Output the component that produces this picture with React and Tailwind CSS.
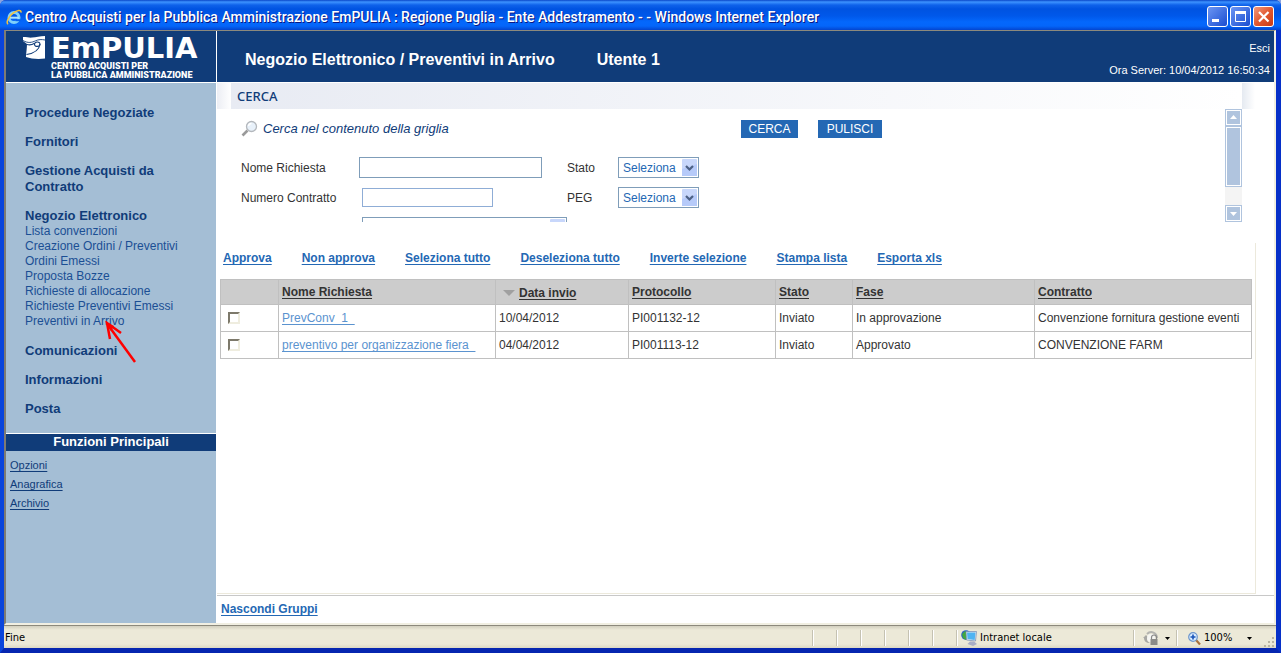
import React from "react";

const menu = [
  { label: "Procedure Negoziate" },
  { label: "Fornitori" },
  { label: "Gestione Acquisti da Contratto" },
  {
    label: "Negozio Elettronico",
    items: [
      "Lista convenzioni",
      "Creazione Ordini / Preventivi",
      "Ordini Emessi",
      "Proposta Bozze",
      "Richieste di allocazione",
      "Richieste Preventivi Emessi",
      "Preventivi in Arrivo",
    ],
  },
  { label: "Comunicazioni" },
  { label: "Informazioni" },
  { label: "Posta" },
];

const actions = [
  "Approva",
  "Non approva",
  "Seleziona tutto",
  "Deseleziona tutto",
  "Inverte selezione",
  "Stampa lista",
  "Esporta xls",
];

const rows = [
  ["PrevConv_1", "10/04/2012", "PI001132-12", "Inviato", "In approvazione", "Convenzione fornitura gestione eventi"],
  ["preventivo per organizzazione fiera", "04/04/2012", "PI001113-12", "Inviato", "Approvato", "CONVENZIONE FARM"],
];

function ExplorerIcon() {
  return (
    <svg viewBox="0 0 16 16" className="h-4 w-4 shrink-0" aria-hidden="true">
      <circle cx="8" cy="8.5" r="5" fill="none" stroke="#7fd0fa" strokeWidth="3" />
      <path d="M4 8.7h9" stroke="#a9e2ff" strokeWidth="2" />
      <path d="M9.5 10.2h5v2h-5z" fill="#0560ee" />
      <path d="M2.2 15C-.5 14 2.500 7.500 7 4.200 11 1 15.500.2 15 3.600" fill="none" stroke="#f4c23c" strokeWidth="1.500" />
    </svg>
  );
}

function TitleBar() {
  const base =
    "flex h-[21px] w-[21px] items-center justify-center rounded-[3px] border border-white";
  return (
    <div className="flex h-[30px] items-center rounded-t-md bg-[linear-gradient(#0a46c8_0px,#3d93ff_2px,#0f62ea_5px,#0053e1_9px,#0058ea_16px,#0468fc_22px,#0466fa_26px,#0345cf_30px)] pt-[3px] pr-[7px] pl-[6px]">
      <ExplorerIcon />
      <h1 className="ml-[3px] flex-1 overflow-hidden font-['Roboto',sans-serif] text-[14px] leading-[18px] font-medium whitespace-nowrap text-white [text-shadow:1px_1px_0_#0a1883]">
        Centro Acquisti per la Pubblica Amministrazione EmPULIA : Regione Puglia - Ente Addestramento - - Windows Internet Explorer
      </h1>
      <div className="flex gap-[2px]">
        <button aria-label="Riduci a icona" className={base + " bg-linear-to-br from-[#6c95f3] to-[#1a4bd0]"}>
          <svg viewBox="0 0 19 19" className="h-[19px] w-[19px]">
            <path d="M4 12h7v3H4z" fill="#fff" />
          </svg>
        </button>
        <button aria-label="Ingrandisci" className={base + " bg-linear-to-br from-[#6c95f3] to-[#1a4bd0]"}>
          <svg viewBox="0 0 19 19" className="h-[19px] w-[19px]">
            <path d="M4.500 5v9.500h10V5" fill="none" stroke="#fff" />
            <path d="M4 4h11v3H4z" fill="#fff" />
          </svg>
        </button>
        <button aria-label="Chiudi" className={base + " bg-linear-to-br from-[#f0987c] via-[#e25830] to-[#c93a12]"}>
          <svg viewBox="0 0 19 19" className="h-[19px] w-[19px]">
            <path d="M5 5l9.500 9.500M14.500 5L5 14.500" stroke="#fff" strokeWidth="2.200" />
          </svg>
        </button>
      </div>
    </div>
  );
}

function Logo() {
  return (
    <div className="flex h-[51px] w-[211px] shrink-0 gap-[6px] border-r border-white pt-[5px] pl-[17px]">
      <svg viewBox="0 0 22 23" className="h-[23px] w-[22px] shrink-0" aria-hidden="true">
        <path d="M0 1c4 0 6 .8 9 .6C13 1.400 17 0 22 0v22.500c-6 .8-14 .5-19-1.500 0-3 .6-6 .8-9.500L4 8 0 5z" fill="#fff" />
        <path d="M0 4.500c5 3 9 2 12.500.3C15.500 3.400 18.500 3.300 22 4" fill="none" stroke="#103c79" strokeWidth=".9" />
        <path d="M4 8.500c3 1 5 .4 7.500-1.200M3.500 18.500C10 17.500 16 15 17 8" fill="none" stroke="#103c79" strokeWidth="1.100" />
        <path d="M11.500 8.500c0-3 5.500-3.500 5.500-.3 0 2.800-5.500 3-5.500.3z" fill="none" stroke="#103c79" strokeWidth="1.100" />
      </svg>
      <div className="whitespace-nowrap text-white">
        <div className="font-['DejaVu_Sans',sans-serif] text-[29px] leading-6 font-bold">EmPULIA</div>
        <div className="pt-[2px] font-['Roboto',sans-serif] text-[9px] leading-[9px] font-black">
          CENTRO ACQUISTI PER
          <br />
          LA PUBBLICA AMMINISTRAZIONE
        </div>
      </div>
    </div>
  );
}

function Header() {
  return (
    <header className="flex border-b border-white bg-[#103c79] text-white">
      <Logo />
      <div className="flex flex-1 items-center gap-[42px] pt-[6px] pl-7 text-[16px] font-bold whitespace-nowrap">
        <h2>Negozio Elettronico / Preventivi in Arrivo</h2>
        <span>Utente 1</span>
      </div>
      <div className="flex flex-col items-end gap-2 pt-[10px] pr-1 text-[11px] leading-[14px] whitespace-nowrap">
        <a href="#esci">Esci</a>
        <span>Ora Server: 10/04/2012 16:50:34</span>
      </div>
    </header>
  );
}

function Pointer() {
  return (
    <svg viewBox="0 0 32 44" className="pointer-events-none absolute top-[7px] left-[80px] h-11 w-8" aria-hidden="true">
      <path d="M3 4l27 37" stroke="#f00" strokeWidth="2.500" fill="none" />
      <path d="M5 18L2 2l14 10" stroke="#f00" strokeWidth="2.500" fill="none" />
      <path d="M1 1l8 4-3 5z" fill="#f00" />
    </svg>
  );
}

function Sidebar() {
  return (
    <aside className="flex w-[210px] shrink-0 flex-col bg-[#a4bed5] text-[#103c79]">
      <nav className="flex flex-col gap-[13px] pt-[22px] pr-10 pb-4 pl-[19px]">
        {menu.map((group) => (
          <div key={group.label}>
            <a href="#menu" className="block text-[13px] leading-4 font-bold">
              {group.label}
            </a>
            {group.items && (
              <ul className="pb-px text-[12px] leading-[15px] whitespace-nowrap text-[#1b4f94]">
                {group.items.map((item) => (
                  <li key={item} className="relative">
                    <a href="#voce">{item}</a>
                    {item === "Preventivi in Arrivo" && <Pointer />}
                  </li>
                ))}
              </ul>
            )}
          </div>
        ))}
      </nav>
      <h3 className="border-t border-white bg-[#103c79] pb-[2px] text-center text-[13px] leading-[15px] font-bold text-white">
        Funzioni Principali
      </h3>
      <ul className="flex flex-col gap-[5px] pt-[7px] pl-1 text-[11px] leading-[14px] underline underline-offset-2">
        <li><a href="#opzioni">Opzioni</a></li>
        <li><a href="#anagrafica">Anagrafica</a></li>
        <li><a href="#archivio">Archivio</a></li>
      </ul>
    </aside>
  );
}

function Dropdown({ id, wide }) {
  return (
    <div className={wide ? "relative ml-[3px] h-[21px] w-[205px]" : "relative h-[21px] w-[81px]"}>
      <select
        id={id}
        aria-label={wide ? "Altro filtro" : undefined}
        className="h-full w-full appearance-none border border-[#7f9db9] bg-white pl-1 text-[12px] text-[#2468b4]"
      >
        <option>{wide ? "" : "Seleziona"}</option>
      </select>
      <svg viewBox="0 0 15 17" className="pointer-events-none absolute top-[2px] right-[2px] h-[17px] w-[15px]" aria-hidden="true">
        <rect width="15" height="17" rx="1" fill="#c8d7fb" />
        <path d="M0 17V10L15 5v12z" fill="#b6caf9" />
        <path d="M4 7l3.500 3.500L11 7" fill="none" stroke="#4d6185" strokeWidth="2.200" />
      </svg>
    </div>
  );
}

function ScrollBar() {
  const box = "border border-[#b0c4de] bg-[#b0c4de] shadow-[inset_0_0_0_1px_#fff]";
  return (
    <div className="flex w-[17px] shrink-0 flex-col bg-[#f4f4f4]">
      <button aria-label="Scorri su" className={"h-[17px] " + box}>
        <svg viewBox="0 0 15 15" className="h-[15px] w-[15px]"><path d="M4 9l3.500-4L11 9z" fill="#fff" /></svg>
      </button>
      <div className={"h-[61px] " + box} />
      <div className="flex-1" />
      <button aria-label="Scorri giù" className={"h-[17px] " + box}>
        <svg viewBox="0 0 15 15" className="h-[15px] w-[15px]"><path d="M4 6l3.500 4L11 6z" fill="#fff" /></svg>
      </button>
    </div>
  );
}

function SearchPanel() {
  const button = "h-[18px] bg-[#2468b4] text-[12px] leading-[18px] text-white";
  return (
    <section>
      <div className="flex h-[26px]">
        <div className="w-[14px] bg-linear-to-r from-[#eceef4] to-white" />
        <h3 className="flex-1 bg-linear-to-r from-[#e8ebf3] to-white pl-[6px] font-['Noto_Sans',sans-serif] text-[13px] leading-[26px] font-medium text-[#103c79]">
          CERCA
        </h3>
        <div className="mr-[19px] w-[13px] bg-linear-to-r from-[#e5eaf1] to-white" />
      </div>
      <div className="mr-8 flex h-[113px]">
        <form className="flex-1 overflow-hidden pl-6" onSubmit={(e) => e.preventDefault()}>
          <div className="mt-[11px] mb-[19px] flex h-[18px] items-center">
            <svg viewBox="0 0 18 18" className="h-[18px] w-[18px]" aria-hidden="true">
              <path d="M1.500 15.500L6.500 10.500" stroke="#9a9a9a" strokeWidth="2.600" />
              <circle cx="10.500" cy="6.500" r="5" fill="#e8f1fa" stroke="#b4b8bd" strokeWidth="1.300" />
              <path d="M7.500 6a3 3 0 0 1 3-2.500" fill="none" stroke="#fff" strokeWidth="1.500" />
            </svg>
            <span className="w-[482px] pl-1 text-[13px] text-[#103c79] italic">Cerca nel contenuto della griglia</span>
            <button type="submit" className={button + " w-[57px]"}>CERCA</button>
            <button type="reset" className={button + " ml-5 w-16"}>PULISCI</button>
          </div>
          <div className="grid auto-rows-[21px] grid-cols-[118px_208px_51px_1fr] items-center gap-y-[9px] text-[12px] text-[#333]">
            <label htmlFor="nome">Nome Richiesta</label>
            <input id="nome" className="h-[21px] w-[183px] border border-[#7f9db9] px-1" />
            <label htmlFor="stato">Stato</label>
            <Dropdown id="stato" />
            <label htmlFor="numero">Numero Contratto</label>
            <input id="numero" className="ml-[3px] h-[19px] w-[131px] border border-[#8fadd6] px-1" />
            <label htmlFor="peg">PEG</label>
            <Dropdown id="peg" />
            <span />
            <Dropdown id="altro" wide />
          </div>
        </form>
        <ScrollBar />
      </div>
    </section>
  );
}

function Results() {
  const cell = "border border-[#c0c0c0] px-[3px]";
  const heads = ["Protocollo", "Stato", "Fase", "Contratto"];
  return (
    <section className="mt-[21px] mr-[18px] flex-1 border-r border-b border-[#ece9dc] pr-[3px] pl-[3px]">
      <div className="flex gap-[30px] pt-[7px] pl-[3px] text-[12px] leading-4 font-bold whitespace-nowrap text-[#2468b4]">
        {actions.map((a) => (
          <a key={a} href="#azione" className="underline underline-offset-2">{a}</a>
        ))}
      </div>
      <table className="mt-[13px] w-full table-fixed border-collapse text-left text-[12px] leading-4 whitespace-nowrap text-[#333]">
        <colgroup>
          <col className="w-[58px]" />
          <col className="w-[217px]" />
          <col className="w-[133px]" />
          <col className="w-[147px]" />
          <col className="w-[77px]" />
          <col className="w-[182px]" />
          <col />
        </colgroup>
        <thead>
          <tr className="h-[25px] bg-[#ccc]">
            <th className={cell} aria-label="Selezione" />
            <th className={cell}><a href="#nome" className="underline underline-offset-2">Nome Richiesta</a></th>
            <th className={cell}>
              <span className="flex items-center gap-1 pt-[2px] pl-1">
                <svg viewBox="0 0 12 6" className="h-[6px] w-3" aria-hidden="true"><path d="M0 0h12L6 6z" fill="#a0a0a0" /></svg>
                <a href="#data" className="underline underline-offset-2">Data invio</a>
              </span>
            </th>
            {heads.map((h) => (
              <th key={h} className={cell}><a href="#ordina" className="underline underline-offset-2">{h}</a></th>
            ))}
          </tr>
        </thead>
        <tbody>
          {rows.map(([name, ...rest]) => (
            <tr key={name} className="h-[27px]">
              <td className={cell}>
                <input
                  type="checkbox"
                  aria-label={"Seleziona " + name}
                  className="ml-1 block h-3 w-3 appearance-none border-2 border-t-[#7d796b] border-r-[#efeddf] border-b-[#efeddf] border-l-[#7d796b] bg-white"
                />
              </td>
              <td className={cell}>
                <a href="#richiesta" className="whitespace-pre text-[#5b93cf] underline underline-offset-2">{name + "  "}</a>
              </td>
              {rest.map((value, i) => (
                <td key={i} className={cell}>{value}</td>
              ))}
            </tr>
          ))}
        </tbody>
      </table>
    </section>
  );
}

function Caret() {
  return (
    <svg viewBox="0 0 5 3" className="h-[3px] w-[5px]" aria-hidden="true"><path d="M0 0h5L2.500 3z" fill="#000" /></svg>
  );
}

function StatusBar() {
  const cell = "flex h-4 items-center border-l border-[#c5c2b2] shadow-[inset_1px_0_0_#fff]";
  return (
    <footer className="flex h-[23px] items-center border-t border-[#8c897c] bg-[linear-gradient(#d2cfbf,#ece9d8_4px,#ece9d8_18px,#dcd8c4)] pt-[2px] font-['DejaVu_Sans_Condensed','Noto_Sans',sans-serif] text-[11px] whitespace-nowrap text-black">
      <span className="flex-1 pl-px">Fine</span>
      {[0, 1, 2, 3, 4, 5].map((n) => (
        <span key={n} className={cell + " w-6"} />
      ))}
      <span className={cell + " w-[177px] gap-[3px] pl-1"}>
        <svg viewBox="0 0 16 16" className="h-4 w-4" aria-hidden="true">
          <circle cx="5" cy="5" r="4.800" fill="#2b62c4" />
          <path d="M1 4l3-3 3 2-2 2 2 2-2 3-3-2z" fill="#42a93f" />
          <path d="M5 1.500h10.500l-1 9.500-9-1z" fill="#dfe8f3" stroke="#7088b0" strokeWidth=".7" />
          <path d="M6 2.500h8.500l-.8 7.500L6.500 9z" fill="#4fb4f2" />
          <path d="M9 11.500h4l3 2.500-4 2-5.500-2z" fill="#a9aec6" />
        </svg>
        Intranet locale
      </span>
      <span className={cell + " w-[43px] gap-[6px] pl-[9px]"}>
        <svg viewBox="0 0 16 14" className="h-[14px] w-4" aria-hidden="true">
          <path d="M0 7l3-3 3 3H4c0 3 1 4 3 5-4 0-6-2-6-5z" fill="#a8a8a4" />
          <path d="M4 3c4-4 10-1 10 4" fill="none" stroke="#b4b4b0" strokeWidth="2" />
          <circle cx="8" cy="7" r="4" fill="#f5f5f2" />
          <path d="M8.500 8V6.500a2.500 2.500 0 0 1 5 0V8" fill="none" stroke="#888" strokeWidth="1.200" />
          <path d="M7.500 8h7v6h-7z" fill="#8b8b88" />
        </svg>
        <Caret />
      </span>
      <button className={cell + " w-[88px] gap-[3px] pl-[11px]"}>
        <svg viewBox="0 0 13 13" className="h-[13px] w-[13px]" aria-hidden="true">
          <path d="M8 8l4 4.500" stroke="#a9713c" strokeWidth="2.200" />
          <circle cx="5" cy="5" r="4.300" fill="#d9ecff" stroke="#6d96cc" strokeWidth="1.200" />
          <path d="M5 2.500v5M2.500 5h5" stroke="#1954b8" strokeWidth="1.600" />
        </svg>
        <span className="flex-1 text-left">100%</span>
        <span className="pr-3"><Caret /></span>
      </button>
      <svg viewBox="0 0 12 12" className="h-3 w-3 self-end" aria-hidden="true">
        <path d="M8 1h2v2H8zM4 5h2v2H4zM8 5h2v2H8zM0 9h2v2H0zM4 9h2v2H4zM8 9h2v2H8z" fill="#b8b4a2" />
      </svg>
    </footer>
  );
}

export default function App() {
  return (
    <div className="bg-[#8aa3e0]">
      <div className="flex min-h-screen flex-col rounded-t-md bg-[#0839c9] font-['Liberation_Sans',Arial,sans-serif]">
        <TitleBar />
        <div className="flex flex-1 flex-col border-t-0 border-r-[5px] border-b-[5px] border-l-4 border-r-[#0630c8] border-b-[#0626b0] border-l-[#0a45dc] bg-white">
          <div className="flex flex-1 flex-col border-t border-r-2 border-b-2 border-l-2 border-t-[#8c897c] border-r-[#f1efe2] border-b-[#f1efe2] border-l-[#7d7b74]">
            <Header />
            <div className="flex flex-1">
              <Sidebar />
              <main className="flex min-w-0 flex-1 flex-col pl-px">
                <SearchPanel />
                <Results />
                <div className="mt-px h-[28px] border-t border-[#c8c8c8] pt-[5px] pl-1 text-[12px] leading-4 font-bold text-[#2468b4]">
                  <a href="#gruppi" className="underline underline-offset-2">Nascondi Gruppi</a>
                </div>
              </main>
            </div>
          </div>
          <StatusBar />
        </div>
      </div>
    </div>
  );
}
